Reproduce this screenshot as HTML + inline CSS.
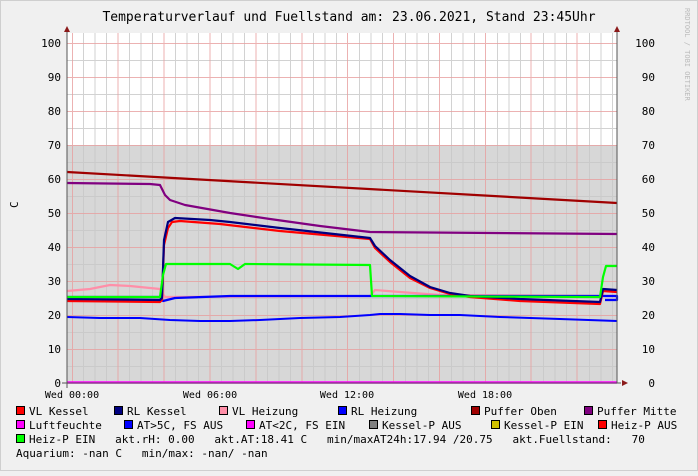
<!DOCTYPE html>
<html><head><meta charset="utf-8"><style>
body{margin:0;width:698px;height:471px;background:#f0f0f0;overflow:hidden}
svg text{font-family:"DejaVu Sans Mono","Liberation Mono",monospace;font-size:11px;fill:#000}
</style></head><body>
<svg width="698" height="471" xmlns="http://www.w3.org/2000/svg">
<rect x="0" y="0" width="698" height="471" fill="#f0f0f0" stroke="#cfcfcf" stroke-width="2"/>
<text x="349" y="21" text-anchor="middle" style="font-size:13px">Temperaturverlauf und Fuellstand am: 23.06.2021, Stand 23:45Uhr</text>
<text x="0" y="0" transform="translate(685,8) rotate(90)" style="font-size:7px;fill:#bbb">RRDTOOL / TOBI OETIKER</text>
<rect x="67" y="33" width="550" height="350" fill="#fff"/>
<rect x="67" y="145" width="550" height="238" fill="#d7d7d7"/>
<g id="grid" stroke-width="1">
<!-- minor vertical -->
<g stroke="#c8c8c8" opacity="0.8">
<path d="M83.5 33V383M95 33V383M106.5 33V383M129.5 33V383M141 33V383M152.5 33V383M175.5 33V383M187 33V383M198.5 33V383M221.5 33V383M233 33V383M244.5 33V383M267.5 33V383M279 33V383M290.5 33V383M313.5 33V383M325 33V383M336.5 33V383M359.5 33V383M371 33V383M382.5 33V383M405.5 33V383M417 33V383M428.5 33V383M451.5 33V383M463 33V383M474.5 33V383M497.5 33V383M509 33V383M520.5 33V383M543.5 33V383M555 33V383M566.5 33V383M589.5 33V383M601 33V383M612.5 33V383"/>
<path d="M67 60.5H617M67 94.5H617M67 128.5H617M67 162.5H617M67 196.5H617M67 230.5H617M67 264.5H617M67 298.5H617M67 332.5H617M67 366.5H617"/>
</g>
<g stroke="#e8a0a0" opacity="0.8">
<path d="M72.5 33V383M118 33V383M164 33V383M210 33V383M256 33V383M302 33V383M347.5 33V383M393.5 33V383M439.5 33V383M485.5 33V383M531 33V383M577 33V383"/>
<path d="M67 43.5H617M67 77.5H617M67 111.5H617M67 145.5H617M67 179.5H617M67 213.5H617M67 247.5H617M67 281.5H617M67 315.5H617M67 349.5H617"/>
</g>
</g>
<g fill="none" stroke-width="2.2" stroke-linejoin="round">
<path stroke="#a00000" d="M67 172 L617 203"/>
<path stroke="#800080" d="M67 183 L150 184 L160 185 L165 195 L170 200 L185 205 L230 213 L270 219 L320 226 L370 232 L617 234"/>
<path stroke="#ff8fa8" d="M67 291 L90 289 L110 285 L130 286 L160 289 L165 297 L370 296 L375 290 L400 292 L440 295 L617 296"/>
<path stroke="#0000ff" d="M67 297 L160 297 L163 301 L175 298 L230 296 L370 296 L617 296 L617 300 L605 300"/>
<path stroke="#ff0000" d="M67 301 L160 302 L162 300 L164 245 L168 228 L172 222 L180 221 L220 224 L280 231 L370 239 L375 248 L390 262 L410 278 L430 288 L450 294 L470 297 L520 301 L600 304 L603 291 L617 292"/>
<path stroke="#000080" d="M67 299 L160 300 L162 298 L164 240 L168 222 L175 218 L210 220 L230 222 L280 228 L370 238 L375 246 L390 260 L410 276 L430 287 L450 293 L470 296 L520 299 L600 302 L603 289 L617 290"/>
<path stroke="#00ff00" d="M67 297 L160 297 L163 275 L166 264 L230 264 L238 269 L245 264 L370 265 L372 296 L600 297 L603 277 L606 266 L617 266"/>
<path stroke="#0000ff" stroke-width="2" d="M67 317 L100 318 L140 318 L170 320 L200 321 L230 321 L260 320 L300 318 L340 317 L370 315 L380 314 L400 314 L430 315 L460 315 L500 317 L560 319 L617 321"/>
<path stroke="#ff00ff" stroke-width="2.5" d="M67 382.5H617"/>
</g>
<path d="M67 30V388M62 383H621" stroke="#555" stroke-width="1"/>
<path d="M617 30V383" stroke="#555" stroke-width="1"/>
<path d="M64 32L67 26L70 32Z M614 32L617 26L620 32Z M622 380L628 383L622 386Z" fill="#8b1a1a"/>
<g text-anchor="end">
<text x="61" y="47">100</text><text x="61" y="81">90</text><text x="61" y="115">80</text><text x="61" y="149">70</text><text x="61" y="183">60</text><text x="61" y="217">50</text><text x="61" y="251">40</text><text x="61" y="285">30</text><text x="61" y="319">20</text><text x="61" y="353">10</text><text x="61" y="387">0</text>
<text x="655" y="47">100</text><text x="655" y="81">90</text><text x="655" y="115">80</text><text x="655" y="149">70</text><text x="655" y="183">60</text><text x="655" y="217">50</text><text x="655" y="251">40</text><text x="655" y="285">30</text><text x="655" y="319">20</text><text x="655" y="353">10</text><text x="655" y="387">0</text>
</g>
<text x="0" y="0" transform="translate(18,208) rotate(-90)">C</text>
<g text-anchor="middle" style="font-size:10px">
<text x="72" y="398" style="font-size:10px">Wed 00:00</text><text x="210" y="398" style="font-size:10px">Wed 06:00</text><text x="347" y="398" style="font-size:10px">Wed 12:00</text><text x="485" y="398" style="font-size:10px">Wed 18:00</text>
</g>
<g stroke="#000" stroke-width="1">
<rect x="16.5" y="406.5" width="8" height="8" fill="#ff0000"/>
<rect x="114.5" y="406.5" width="8" height="8" fill="#000080"/>
<rect x="219.5" y="406.5" width="8" height="8" fill="#ff8fa8"/>
<rect x="338.5" y="406.5" width="8" height="8" fill="#0000ff"/>
<rect x="471.5" y="406.5" width="8" height="8" fill="#a00000"/>
<rect x="584.5" y="406.5" width="8" height="8" fill="#800080"/>
<rect x="16.5" y="420.5" width="8" height="8" fill="#ff00ff"/>
<rect x="124.5" y="420.5" width="8" height="8" fill="#0000ff"/>
<rect x="246.5" y="420.5" width="8" height="8" fill="#ff00ff"/>
<rect x="369.5" y="420.5" width="8" height="8" fill="#808080"/>
<rect x="491.5" y="420.5" width="8" height="8" fill="#d0c000"/>
<rect x="598.5" y="420.5" width="8" height="8" fill="#ff0000"/>
<rect x="16.5" y="434.5" width="8" height="8" fill="#00ff00"/>
</g>
<text x="29" y="415">VL Kessel</text><text x="127" y="415">RL Kessel</text><text x="232" y="415">VL Heizung</text><text x="351" y="415">RL Heizung</text><text x="484" y="415">Puffer Oben</text><text x="597" y="415">Puffer Mitte</text>
<text x="29" y="429">Luftfeuchte</text><text x="137" y="429">AT&gt;5C, FS AUS</text><text x="259" y="429">AT&lt;2C, FS EIN</text><text x="382" y="429">Kessel-P AUS</text><text x="504" y="429">Kessel-P EIN</text><text x="611" y="429">Heiz-P AUS</text>
<text x="29" y="443" xml:space="preserve">Heiz-P EIN   akt.rH: 0.00   akt.AT:18.41 C   min/maxAT24h:17.94 /20.75   akt.Fuellstand:   70</text>
<text x="16" y="457" xml:space="preserve">Aquarium: -nan C   min/max: -nan/ -nan</text>
</svg>
</body></html>
